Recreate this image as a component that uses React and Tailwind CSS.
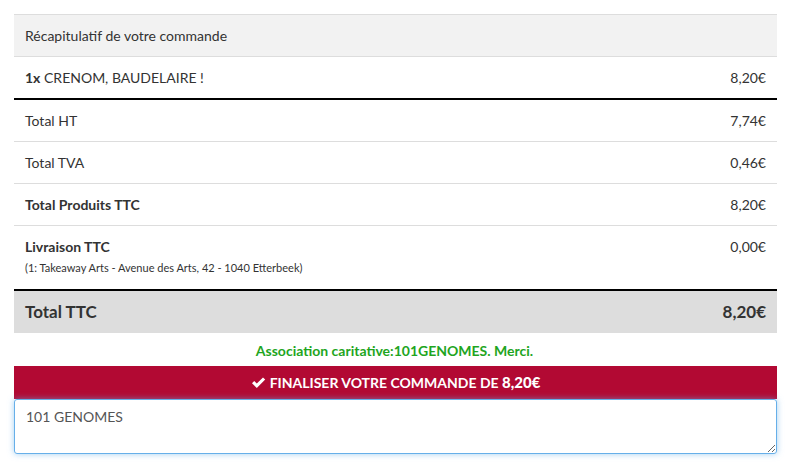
import React from 'react';

const Row = ({ label, amount, bold }) => (
    <div className="flex h-[42px] items-center justify-between border-t border-[#dddddd] px-[11px]">
        <span className={bold ? 'font-bold' : ''}>{label}</span>
        <span>{amount}</span>
    </div>
);

const App = () => {
    return (
        <div className="min-h-[472px] bg-white pt-[14px] px-[14px] text-[14px] text-[#333333] [font-family:Lato,'Open_Sans',sans-serif] w-[789px]">
            {/* Recap table */}
            <div className="w-[763px]">
                <div className="flex h-[42px] items-center border-t border-[#dddddd] bg-[#f2f2f2] px-[11px]">
                    Récapitulatif de votre commande
                </div>
                <div className="flex h-[42px] items-center justify-between border-t border-[#dddddd] px-[11px]">
                    <span><b>1x</b> CRENOM, BAUDELAIRE !</span>
                    <span>8,20€</span>
                </div>
                <div className="h-[2px] bg-black"></div>
                <div className="flex h-[41px] items-center justify-between px-[11px]">
                    <span>Total HT</span>
                    <span>7,74€</span>
                </div>
                <Row label="Total TVA" amount="0,46€" />
                <Row label="Total Produits TTC" amount="8,20€" bold />
                <div className="flex h-[64px] justify-between border-t border-[#dddddd] px-[11px] pt-[11px]">
                    <div className="flex flex-col">
                        <span className="font-bold leading-[20px]">Livraison TTC</span>
                        <span className="mt-[3px] text-[11px] leading-[15px]">(1: Takeaway Arts - Avenue des Arts, 42 - 1040 Etterbeek)</span>
                    </div>
                    <span className="leading-[20px]">0,00€</span>
                </div>
                <div className="h-[2px] bg-black"></div>
                <div className="flex h-[42px] items-center justify-between bg-[#dddddd] px-[11px] text-[17px]">
                    <span className="font-bold">Total TTC</span>
                    <span className="font-bold">8,20€</span>
                </div>
            </div>

            {/* Charity note */}
            <div className="flex h-[33px] items-center justify-center pt-[2px] font-bold text-[#1ea51e]">
                Association caritative:101GENOMES. Merci.
            </div>

            {/* Submit */}
            <button className="flex h-[33px] w-[763px] items-center justify-center gap-[4px] bg-[#b20933] font-bold uppercase text-white">
                <svg width="15" height="13" viewBox="0 0 15 13" fill="white">
                    <path d="M1 7.2 L3.2 5 L5.8 7.6 L12 1.4 L14.2 3.6 L5.8 12 Z" />
                </svg>
                <span>Finaliser votre commande de <span className="font-black text-[15px]">8,20€</span></span>
            </button>

            {/* Comment box */}
            <textarea
                defaultValue="101 GENOMES"
                className="block h-[55px] w-[763px] resize-y rounded-[3px] border border-[#66afe9] px-[11px] py-[6px] text-[14px] text-[#555555] shadow-[0_0_6px_rgba(102,175,233,0.6)] outline-none"
            />
        </div>
    );
};

export default App;
